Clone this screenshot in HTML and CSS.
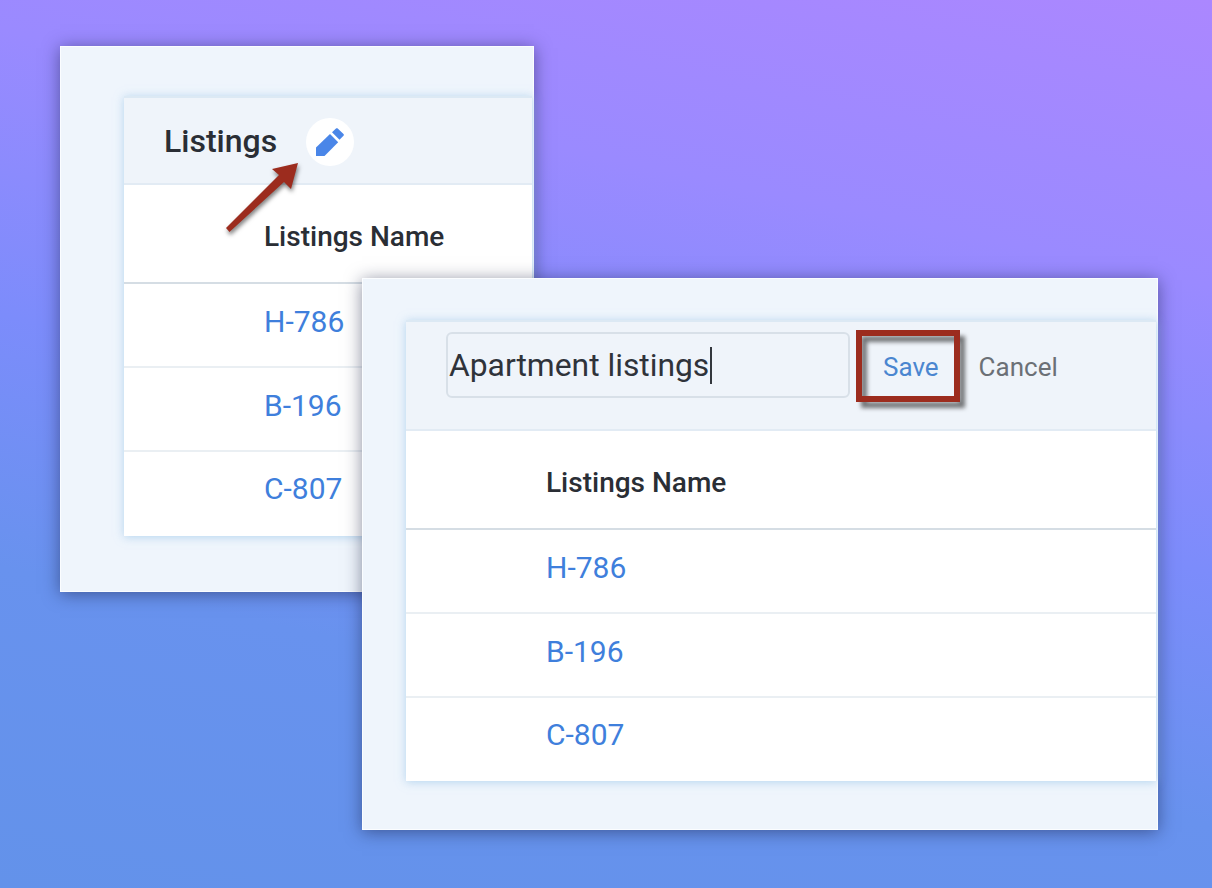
FILE: index.html
```html
<!DOCTYPE html>
<html lang="en">
<head>
<meta charset="utf-8">
<title>Listings</title>
<link rel="stylesheet" href="styles.css">
</head>
<body>
<main class="stage">
  <section class="window window-back">
    <div class="card">
      <header class="card-head">
        <h2 class="title">Listings</h2>
        <span class="edit-btn">
          <svg class="edit-icon" viewBox="0 0 28 28"><path d="M0 28V19.5L14 6l8.2 8.2L8.5 28z"/><path d="M16 4.2 20 .5c.5-.5 1.2-.5 1.7 0l5.8 5.5c.5.5.5 1.2 0 1.7l-4 4z"/></svg>
        </span>
      </header>
      <div class="col-head">Listings Name</div>
      <div class="row"><a class="link">H-786</a></div>
      <div class="row"><a class="link">B-196</a></div>
      <div class="row"><a class="link">C-807</a></div>
    </div>
  </section>

  <svg class="arrow" viewBox="0 0 100 100">
    <polygon points="88,23 62,29 69,35 16,88 19.5,92 74,42 81,49" />
  </svg>

  <section class="window window-front">
    <div class="card">
      <header class="card-head card-head-edit">
        <div class="name-input"><span>Apartment listings</span><i class="caret"></i></div>
        <span class="action action-save">Save</span>
        <span class="action action-cancel">Cancel</span>
      </header>
      <div class="col-head">Listings Name</div>
      <div class="row"><a class="link">H-786</a></div>
      <div class="row"><a class="link">B-196</a></div>
      <div class="row"><a class="link">C-807</a></div>
    </div>
  </section>

  <div class="highlight"></div>
</main>
</body>
</html>
```

FILE: styles.css
```css
* { box-sizing: border-box; }
html, body { margin: 0; padding: 0; }
body { font-family: Roboto, "Liberation Sans", sans-serif; color: #2a2e35; }

.stage {
  position: relative;
  width: 1212px;
  height: 888px;
  overflow: hidden;
  background: linear-gradient(192deg, #ab87ff 0%, #9a8aff 25%, #7c8cfb 50%, #6892ee 72%, #6392ea 100%);
}

.window {
  position: absolute;
  display: flex;
  background: #eff5fc;
  border: 1px solid #fbfdff;
  box-shadow: 0 2px 16px rgba(20, 25, 60, 0.5);
}
.window-back { left: 60px; top: 46px; width: 474px; height: 546px; padding: 49px 1px 55px 63px; }
.window-front { left: 362px; top: 278px; width: 796px; height: 552px; padding: 41px 1px 48px 43px; }

.card {
  flex: 1;
  min-width: 0;
  display: flex;
  flex-direction: column;
  background: #fff;
  box-shadow: 0 1px 9px rgba(140, 190, 230, 0.6);
}

.card-head {
  display: flex;
  align-items: center;
  height: 89px;
  padding-left: 40px;
  background: #eff4fa;
  border-top: 2px solid #dce9f4;
  border-bottom: 2px solid #e2ebf4;
}
.card-head-edit { height: 111px; padding-bottom: 21px; }

.title { margin: 0; font-size: 32px; font-weight: 500; }
.edit-btn {
  display: flex;
  align-items: center;
  justify-content: center;
  width: 48px;
  height: 48px;
  margin: 2px 0 0 29px;
  border-radius: 50%;
  background: #fff;
}
.edit-icon { width: 28px; height: 28px; fill: #4a86e8; }

.name-input {
  display: flex;
  align-items: center;
  width: 404px;
  height: 66px;
  padding-left: 1px;
  border: 2px solid #d8e0e8;
  border-radius: 6px;
  font-size: 31.8px;
  color: #2f333a;
}
.caret { width: 2px; height: 37px; margin-left: 1px; background: #33373d; }

.action { font-size: 26px; padding-top: 4px; }
.action-save { margin-left: 33px; color: #4a86d0; }
.action-cancel { margin-left: 40px; color: #6b7076; }

.col-head {
  display: flex;
  align-items: center;
  height: 99px;
  padding: 5px 0 0 140px;
  font-size: 28px;
  font-weight: 500;
  border-bottom: 2px solid #d5dde4;
}
.row {
  display: flex;
  align-items: center;
  height: 84px;
  padding: 0 0 8px 140px;
  border-bottom: 2px solid #eaeff3;
}
.row:last-child { height: 83px; border-bottom-color: transparent; }
.link { font-size: 30px; color: #3f7fdc; }

.arrow {
  position: absolute;
  left: 210px;
  top: 140px;
  width: 100px;
  height: 100px;
  fill: #9c2c1e;
  filter: drop-shadow(1px 3px 2px rgba(0, 0, 0, 0.5));
}

.highlight {
  position: absolute;
  left: 856px;
  top: 330px;
  width: 104px;
  height: 72px;
  border: 6px solid #9c2c1e;
  filter: drop-shadow(5px 6px 2px rgba(30, 30, 30, 0.6));
}
```
